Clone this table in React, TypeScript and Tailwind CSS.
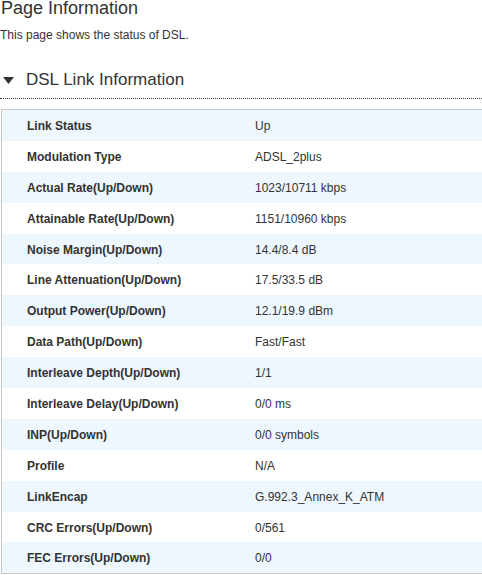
const rows: [string, string][] = [
  ["Link Status", "Up"],
  ["Modulation Type", "ADSL_2plus"],
  ["Actual Rate(Up/Down)", "1023/10711 kbps"],
  ["Attainable Rate(Up/Down)", "1151/10960 kbps"],
  ["Noise Margin(Up/Down)", "14.4/8.4 dB"],
  ["Line Attenuation(Up/Down)", "17.5/33.5 dB"],
  ["Output Power(Up/Down)", "12.1/19.9 dBm"],
  ["Data Path(Up/Down)", "Fast/Fast"],
  ["Interleave Depth(Up/Down)", "1/1"],
  ["Interleave Delay(Up/Down)", "0/0 ms"],
  ["INP(Up/Down)", "0/0 symbols"],
  ["Profile", "N/A"],
  ["LinkEncap", "G.992.3_Annex_K_ATM"],
  ["CRC Errors(Up/Down)", "0/561"],
  ["FEC Errors(Up/Down)", "0/0"],
];

export default function App() {
  return (
    <div className="h-[575px] w-[482px] overflow-hidden bg-white font-['Liberation_Sans',Arial,sans-serif] text-[#333]">
      <h1 className="-mt-px ml-px text-[18px] leading-[18px]">Page Information</h1>
      <p className="mt-[11px] text-[12px] leading-[14px]">This page shows the status of DSL.</p>
      <div className="mt-[28px] flex items-center border-b border-dotted border-[#333] pb-[8px]">
        <svg width="12" height="9" viewBox="0 0 12 9" className="ml-[3px] mt-px">
          <polygon points="0,1 11,1 5.5,8" fill="#333" />
        </svg>
        <h2 className="ml-[11px] text-[17px] leading-[20px]">DSL Link Information</h2>
      </div>
      <div className="ml-px mt-[10px] w-[482px] border border-[#c8c8c8]">
        {rows.map(([label, value], i) => (
          <div
            key={label}
            className={`flex h-[30.9px] items-center pt-px text-[12px] ${i % 2 === 0 ? "bg-[#eef6fe]" : "bg-white"}`}
          >
            <span className="w-[253px] pl-[25px] font-bold">{label}</span>
            <span>{value}</span>
          </div>
        ))}
      </div>
    </div>
  );
}
